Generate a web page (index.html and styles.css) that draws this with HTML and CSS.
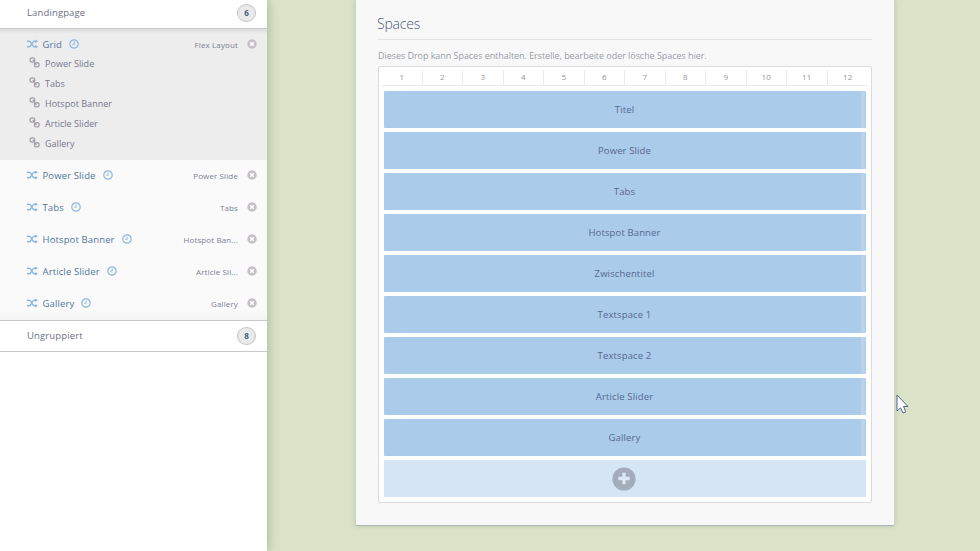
FILE: index.html
```
<!DOCTYPE html>
<html lang="de">
<head>
<meta charset="utf-8">
<title>Spaces</title>
<link rel="stylesheet" href="styles.css">
</head>
<body>
<svg class="defs" width="0" height="0">
  <symbol id="shuffle" viewBox="0 0 12 10"><path d="M0 2H2.3C5 2 5.5 8 8 8H10M0 8H2.3C5 8 5.5 2 8 2H10" fill="none" stroke="currentColor" stroke-width="1.5"/><path d="M9 0L12 2L9 4ZM9 6L12 8L9 10Z" fill="currentColor"/></symbol>
  <symbol id="clock" viewBox="0 0 10 10"><circle cx="5" cy="5" r="4.2" fill="none" stroke="currentColor" stroke-width="1.2"/><path d="M5.2 2.5V5.3H3.2" fill="none" stroke="currentColor" stroke-width=".9"/></symbol>
  <symbol id="link" viewBox="0 0 10 10"><g fill="none" stroke="currentColor" stroke-width="1.2"><rect x="1" y=".8" width="4.2" height="3.8" rx="1.7"/><rect x="5" y="5.2" width="4.2" height="3.8" rx="1.7"/><path d="M3.4 2.8L5.3 4.4M4.6 5.3L7 7"/></g></symbol>
  <symbol id="remove" viewBox="0 0 10 10"><circle cx="5" cy="5" r="4.7" fill="currentColor"/><path d="M3.2 3.2L6.8 6.8M6.8 3.2L3.2 6.8" stroke="#fff" stroke-width="1.6"/></symbol>
</svg>
<div class="app">
  <aside class="sidebar">
    <header class="group-head first"><span>Landingpage</span><b class="count">6</b></header>
    <section class="active">
      <div class="row"><svg class="shuffle"><use href="#shuffle"/></svg><span class="name">Grid</span><svg class="clock"><use href="#clock"/></svg><span class="type">Flex Layout</span><svg class="remove"><use href="#remove"/></svg></div>
      <ul class="links">
        <li><svg><use href="#link"/></svg>Power Slide</li>
        <li><svg><use href="#link"/></svg>Tabs</li>
        <li><svg><use href="#link"/></svg>Hotspot Banner</li>
        <li><svg><use href="#link"/></svg>Article Slider</li>
        <li><svg><use href="#link"/></svg>Gallery</li>
      </ul>
    </section>
    <section class="items">
      <div class="row"><svg class="shuffle"><use href="#shuffle"/></svg><span class="name">Power Slide</span><svg class="clock"><use href="#clock"/></svg><span class="type">Power Slide</span><svg class="remove"><use href="#remove"/></svg></div>
      <div class="row"><svg class="shuffle"><use href="#shuffle"/></svg><span class="name">Tabs</span><svg class="clock"><use href="#clock"/></svg><span class="type">Tabs</span><svg class="remove"><use href="#remove"/></svg></div>
      <div class="row"><svg class="shuffle"><use href="#shuffle"/></svg><span class="name">Hotspot Banner</span><svg class="clock"><use href="#clock"/></svg><span class="type">Hotspot Ban...</span><svg class="remove"><use href="#remove"/></svg></div>
      <div class="row"><svg class="shuffle"><use href="#shuffle"/></svg><span class="name">Article Slider</span><svg class="clock"><use href="#clock"/></svg><span class="type">Article Sli...</span><svg class="remove"><use href="#remove"/></svg></div>
      <div class="row"><svg class="shuffle"><use href="#shuffle"/></svg><span class="name">Gallery</span><svg class="clock"><use href="#clock"/></svg><span class="type">Gallery</span><svg class="remove"><use href="#remove"/></svg></div>
    </section>
    <header class="group-head"><span>Ungruppiert</span><b class="count">8</b></header>
  </aside>
  <main class="sheet">
    <h1>Spaces</h1>
    <p class="hint">Dieses Drop kann Spaces enthalten. Erstelle, bearbeite oder lösche Spaces hier.</p>
    <div class="board">
      <div class="columns"><span>1</span><span>2</span><span>3</span><span>4</span><span>5</span><span>6</span><span>7</span><span>8</span><span>9</span><span>10</span><span>11</span><span>12</span></div>
      <div class="spaces">
        <div class="space">Titel</div>
        <div class="space">Power Slide</div>
        <div class="space">Tabs</div>
        <div class="space">Hotspot Banner</div>
        <div class="space">Zwischentitel</div>
        <div class="space">Textspace 1</div>
        <div class="space">Textspace 2</div>
        <div class="space">Article Slider</div>
        <div class="space">Gallery</div>
        <div class="add"><svg viewBox="0 0 24 24"><circle cx="12" cy="12" r="11.6" fill="#a2acba"/><path d="M6.3 11.5H17.7M12 5.8V17.2" stroke="#d9e6f5" stroke-width="3.4"/></svg></div>
      </div>
    </div>
  </main>
</div>
<svg class="cursor" viewBox="0 0 13 20"><path d="M1 1V17L4.5 13.8L7 19L9.8 17.8L7.5 12.5H12Z" fill="#fff" stroke="#53658c" stroke-width="1"/></svg>
</body>
</html>
```

FILE: styles.css
```
* { box-sizing: border-box; }
body { margin: 0; overflow: hidden; background: #dae3c8; font: 9.5px/14px "Open Sans", sans-serif; letter-spacing: .13px; color: #6b7085; }
svg { display: block; flex: none; }
.defs { position: absolute; }
.app { display: flex; align-items: flex-start; height: 551px; }
.sidebar { width: 267px; height: 551px; flex: none; background: #fff; box-shadow: 0 0 11px rgba(80, 95, 50, .4); }
.group-head { display: flex; align-items: center; justify-content: space-between; height: 32px; padding: 0 11px 0 27px; border-top: 1px solid #c9c9cb; border-bottom: 1px solid #c9c9cb; }
.group-head.first { height: 29px; padding-bottom: 2px; border-top: 0; }
.count { width: 19px; height: 18px; border: 1px solid #c4c4c6; border-radius: 50%; background: #e9e9ea; color: #4c5d80; font-size: 8px; line-height: 16px; text-align: center; }
.active { height: 131px; background: linear-gradient(#dedede, #ededed 5px); }
.row { display: flex; align-items: center; height: 32px; padding: 0 10px 2px 27px; }
.active .row { height: 30px; padding-bottom: 0; }
.shuffle { width: 11px; height: 10px; color: #8fb8df; margin: -1px 4.5px 0 0; }
.name { padding-top: 2px; color: #50779d; }
.clock { width: 10px; height: 10px; margin-left: 7px; color: #8db7df; }
.type { margin-left: auto; padding-top: 2px; font-size: 8px; letter-spacing: .12px; color: #7c8193; }
.remove { width: 10px; height: 10px; margin: -1px 0 0 9px; color: #c3bfc4; }
.links { list-style: none; margin: -5px 0 0; padding: 0 0 0 29px; font-size: 9px; letter-spacing: .03px; }
.links li { display: flex; align-items: center; height: 20px; color: #76778f; }
.links svg { width: 11px; height: 11px; margin: -3px 5px 0 0; color: #a5a0a7; }
.items { height: 160px; background: linear-gradient(#fafafa 150px, #f5f5f5); }
.sheet { width: 540px; height: 526px; margin-left: 88px; flex: none; padding: 14px 22px 0; background: #f8f8f8; border: solid #cfd3ca; border-width: 0 1px 1px; border-bottom-color: #aeb2b2; border-radius: 0 0 2px 2px; box-shadow: 0 0 5px rgba(70, 85, 50, .2); }
h1 { margin: 0 0 0 -1px; padding-left: 0; width: 495px; height: 26px; border-bottom: 1px solid #e3e3e3; font-size: 14px; line-height: 20px; font-weight: 300; letter-spacing: -.2px; color: #4d5777; }
.hint { margin: 9px 0 3px; font-size: 9px; letter-spacing: -.05px; color: #9a9da6; }
.board { width: 494px; height: 437px; padding: 3px; background: #fff; border: 1px solid #dcdcde; border-radius: 2px; }
.columns { display: grid; grid-template-columns: repeat(12, 1fr); height: 16px; margin: 0; border-bottom: 1px solid #ebebeb; font-size: 8px; text-align: center; color: #94979c; }
.columns span { border-right: 1px solid #ebebeb; }
.columns span:last-child { border: 0; }
.spaces { display: grid; grid-auto-rows: 37px; gap: 4px; padding: 5px 2px 0; }
.space, .add { display: flex; align-items: center; justify-content: center; border-radius: 1px; }
.space { padding: 1px 0 0; background: #abcbea; border-right: 1px solid #abcbea; box-shadow: inset -4px 0 #b9d2ee; color: #566890; }
.add { background: #d6e5f5; }
.add svg { width: 24px; height: 24px; margin-right: 2px; }
.cursor { position: absolute; left: 895.5px; top: 393.5px; width: 13px; height: 20px; }
```
